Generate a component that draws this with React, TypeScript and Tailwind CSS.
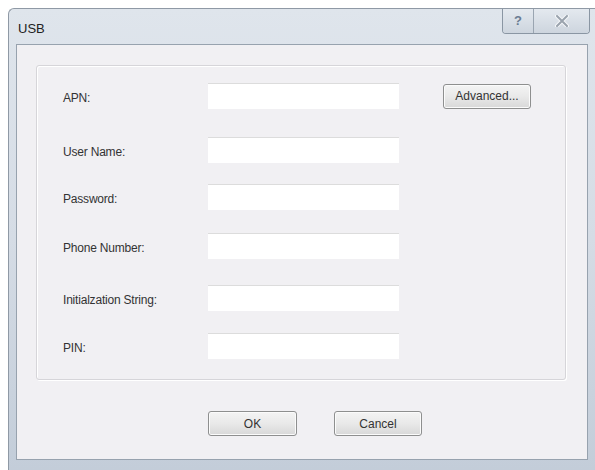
import React from "react";

const fields = [
  { label: "APN:", mt: "mt-0" },
  { label: "User Name:", mt: "mt-[28px]" },
  { label: "Password:", mt: "mt-[21px]" },
  { label: "Phone Number:", mt: "mt-[23px]" },
  { label: "Initialzation String:", mt: "mt-[26px]" },
  { label: "PIN:", mt: "mt-[22px]" },
];

function WinButton({ label, className }: { label: string; className: string }) {
  return (
    <button
      className={
        "flex items-center justify-center rounded-[3px] border border-[#8e8f8f] bg-gradient-to-b from-[#f4f4f4] via-[#e9e9e9] to-[#d8d8d8] text-[12px] text-[#333] shadow-[inset_0_0_0_1px_#fbfbfb] " +
        className
      }
    >
      {label}
    </button>
  );
}

function TitleButtons() {
  return (
    <div className="flex h-[25px] self-start overflow-hidden rounded-b-[4px] border border-t-0 border-[#8a96a3] shadow-[inset_0_1px_0_#eef2f6]">
      <div className="flex w-[31px] items-center justify-center border-r border-[#9aa5b1] bg-gradient-to-b from-[#e4e9ef] to-[#cdd5de] text-[13px] font-bold text-[#6a7c92]">
        ?
      </div>
      <div className="flex w-[55px] items-center justify-center bg-gradient-to-b from-[#e4e9ef] to-[#cdd5de]">
        <svg width="14" height="12" viewBox="0 0 14 12">
          <path
            d="M2 1 L12 11 M12 1 L2 11"
            stroke="#f5f7f9"
            strokeWidth="4"
            strokeLinecap="round"
          />
          <path
            d="M2 1 L12 11 M12 1 L2 11"
            stroke="#9aa3ad"
            strokeWidth="2"
            strokeLinecap="round"
          />
        </svg>
      </div>
    </div>
  );
}

export default function App() {
  return (
    <div
      className="flex h-[470px] w-[595px] bg-white pl-2 pt-2"
      style={{ fontFamily: '"Liberation Sans", Arial, sans-serif' }}
    >
      <div className="flex flex-1 flex-col rounded-tl-[6px] border-l border-t border-[#8f99a5] bg-gradient-to-b from-[#dfe5ec] via-[#d5dce5] to-[#c3cdd9]">
        <div className="flex h-[35px] items-start pr-[5px]">
          <span className="mt-[10px] ml-[9px] flex-1 text-[13px] text-[#222]">USB</span>
          <TitleButtons />
        </div>
        <div className="ml-[7px] mr-[7px] mb-[10px] flex flex-1 flex-col border border-[#97a2ae] bg-[#f1f0f3]">
          <div className="ml-[19px] mr-[21px] mt-[20px] rounded-[3px] border border-[#d6d5d9] pb-[20px] pt-[17px] shadow-[inset_1px_1px_0_#ffffff,1px_1px_0_#ffffff]">
            <div className="flex flex-col">
              {fields.map((f, i) => (
                <div key={f.label} className={"flex h-[26px] items-center " + f.mt}>
                  <span className="w-[171px] shrink-0 pl-[26px] pt-[3px] text-[12px] tracking-[-0.2px] text-[#333]">
                    {f.label}
                  </span>
                  <div className="h-[26px] w-[191px] shrink-0 border-t border-[#dcdcdc] bg-white" />
                  {i === 0 && <WinButton label="Advanced..." className="ml-[44px] h-[25px] w-[88px]" />}
                </div>
              ))}
            </div>
          </div>
          <div className="mt-[31px] flex gap-[37px] pl-[191px]">
            <WinButton label="OK" className="h-[25px] w-[89px]" />
            <WinButton label="Cancel" className="h-[25px] w-[88px]" />
          </div>
        </div>
      </div>
    </div>
  );
}
